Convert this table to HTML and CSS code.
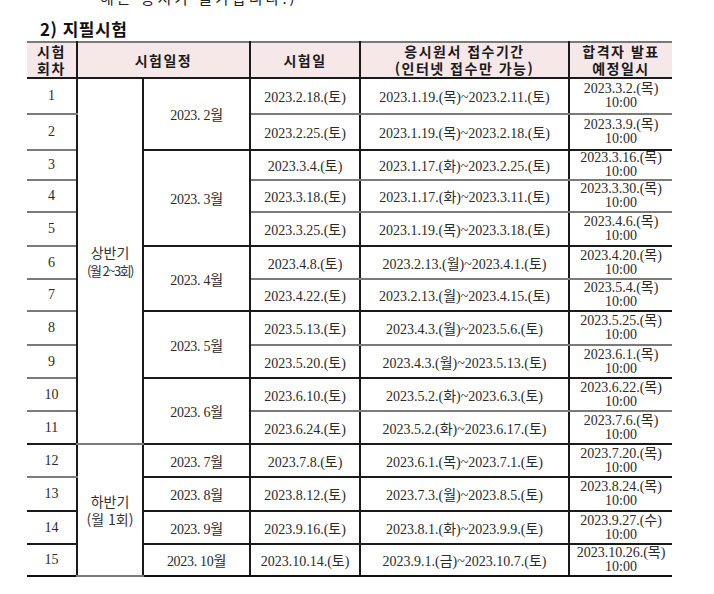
FILE: index.html
```html
<!DOCTYPE html>
<html lang="ko">
<head>
<meta charset="utf-8">
<link rel="stylesheet" href="styles.css">
</head>
<body>
<div class="page">
  <p class="cut">해는 응시가 불가합니다.)</p>
  <h2 class="title">2) 지필시험</h2>
  <table class="sched">
    <colgroup>
      <col class="c1"><col class="c2"><col class="c3"><col class="c4"><col class="c5"><col class="c6">
    </colgroup>
    <thead>
      <tr class="hd">
        <th>시험<br>회차</th>
        <th colspan="2">시험일정</th>
        <th>시험일</th>
        <th>응시원서 접수기간<br>(인터넷 접수만 가능)</th>
        <th>합격자 발표<br>예정일시</th>
      </tr>
    </thead>
    <tbody>
      <tr class="r36">
        <td class="no">1</td>
        <td class="half" rowspan="11">상반기<br><span class="sub">(월 2~3회)</span></td>
        <td class="mon grp" rowspan="2">2023. 2월</td>
        <td>2023.2.18.(토)</td>
        <td>2023.1.19.(목)~2023.2.11.(토)</td>
        <td class="ann">2023.3.2.(목)<br>10:00</td>
      </tr>
      <tr class="r36">
        <td class="no">2</td>
        <td class="grp">2023.2.25.(토)</td>
        <td class="grp">2023.1.19.(목)~2023.2.18.(토)</td>
        <td class="ann grp">2023.3.9.(목)<br>10:00</td>
      </tr>
      <tr class="r29">
        <td class="no">3</td>
        <td class="mon grp" rowspan="3">2023. 3월</td>
        <td>2023.3.4.(토)</td>
        <td>2023.1.17.(화)~2023.2.25.(토)</td>
        <td class="ann">2023.3.16.(목)<br>10:00</td>
      </tr>
      <tr class="r32">
        <td class="no">4</td>
        <td>2023.3.18.(토)</td>
        <td>2023.1.17.(화)~2023.3.11.(토)</td>
        <td class="ann">2023.3.30.(목)<br>10:00</td>
      </tr>
      <tr class="r34">
        <td class="no">5</td>
        <td class="grp">2023.3.25.(토)</td>
        <td class="grp">2023.1.19.(목)~2023.3.18.(토)</td>
        <td class="ann grp">2023.4.6.(목)<br>10:00</td>
      </tr>
      <tr class="r33">
        <td class="no">6</td>
        <td class="mon grp" rowspan="2">2023. 4월</td>
        <td>2023.4.8.(토)</td>
        <td>2023.2.13.(월)~2023.4.1.(토)</td>
        <td class="ann">2023.4.20.(목)<br>10:00</td>
      </tr>
      <tr class="r32">
        <td class="no">7</td>
        <td class="grp">2023.4.22.(토)</td>
        <td class="grp">2023.2.13.(월)~2023.4.15.(토)</td>
        <td class="ann grp">2023.5.4.(목)<br>10:00</td>
      </tr>
      <tr class="r34">
        <td class="no">8</td>
        <td class="mon grp" rowspan="2">2023. 5월</td>
        <td>2023.5.13.(토)</td>
        <td>2023.4.3.(월)~2023.5.6.(토)</td>
        <td class="ann">2023.5.25.(목)<br>10:00</td>
      </tr>
      <tr class="r33">
        <td class="no">9</td>
        <td class="grp">2023.5.20.(토)</td>
        <td class="grp">2023.4.3.(월)~2023.5.13.(토)</td>
        <td class="ann grp">2023.6.1.(목)<br>10:00</td>
      </tr>
      <tr class="r33">
        <td class="no">10</td>
        <td class="mon grp" rowspan="2">2023. 6월</td>
        <td>2023.6.10.(토)</td>
        <td>2023.5.2.(화)~2023.6.3.(토)</td>
        <td class="ann">2023.6.22.(목)<br>10:00</td>
      </tr>
      <tr class="r33">
        <td class="no grp">11</td>
        <td class="grp">2023.6.24.(토)</td>
        <td class="grp">2023.5.2.(화)~2023.6.17.(토)</td>
        <td class="ann grp">2023.7.6.(목)<br>10:00</td>
      </tr>
      <tr class="r33">
        <td class="no">12</td>
        <td class="half" rowspan="4">하반기<br><span class="sub2">(월 1회)</span></td>
        <td class="mon grp">2023. 7월</td>
        <td class="grp">2023.7.8.(토)</td>
        <td class="grp">2023.6.1.(목)~2023.7.1.(토)</td>
        <td class="ann grp">2023.7.20.(목)<br>10:00</td>
      </tr>
      <tr class="r34">
        <td class="no grp">13</td>
        <td class="mon grp">2023. 8월</td>
        <td class="grp">2023.8.12.(토)</td>
        <td class="grp">2023.7.3.(월)~2023.8.5.(토)</td>
        <td class="ann grp">2023.8.24.(목)<br>10:00</td>
      </tr>
      <tr class="r33">
        <td class="no grp">14</td>
        <td class="mon grp">2023. 9월</td>
        <td class="grp">2023.9.16.(토)</td>
        <td class="grp">2023.8.1.(화)~2023.9.9.(토)</td>
        <td class="ann grp">2023.9.27.(수)<br>10:00</td>
      </tr>
      <tr class="r32 last">
        <td class="no">15</td>
        <td class="mon">2023. 10월</td>
        <td>2023.10.14.(토)</td>
        <td>2023.9.1.(금)~2023.10.7.(토)</td>
        <td class="ann">2023.10.26.(목)<br>10:00</td>
      </tr>
    </tbody>
  </table>
</div>
</body>
</html>
```

FILE: styles.css
```css
html, body {
  margin: 0;
  padding: 0;
  background: #ffffff;
}

.page {
  width: 714px;
  height: 594px;
  overflow: hidden;
  padding-left: 27px;
  box-sizing: border-box;
}

.cut {
  margin: -11px 0 0 73px;
  font-family: "Noto Sans CJK KR", sans-serif;
  font-size: 15px;
  line-height: 17px;
  letter-spacing: 3px;
  color: #222;
  height: 17px;
  overflow: hidden;
  white-space: nowrap;
}

.title {
  margin: 13px 0 2px 13px;
  font-family: "Noto Sans CJK KR", sans-serif;
  font-weight: 700;
  font-size: 17px;
  line-height: 20px;
  letter-spacing: 0.5px;
  color: #111;
}

.sched {
  border-collapse: collapse;
  width: 645px;
  table-layout: fixed;
  font-family: "Liberation Serif", "Noto Sans CJK KR", serif;
  font-size: 14px;
  color: #2a2a2a;
  border-top: 2px solid #111;
  border-bottom: 2px solid #111;
}

.c1 { width: 50px; }
.c2 { width: 66px; }
.c3 { width: 107px; }
.c4 { width: 110px; }
.c5 { width: 209px; }
.c6 { width: 103px; }

.sched th,
.sched td {
  padding: 0;
  text-align: center;
  vertical-align: middle;
  border-left: 2px solid #1a1a1a;
  border-right: 2px solid #1a1a1a;
  border-top: 2px solid #7a7a7a;
  border-bottom: 2px solid #7a7a7a;
}

.sched th:first-child,
.sched td.no {
  border-left: none;
}

.sched th:last-child,
.sched td.ann {
  border-right: none;
}

.hd th {
  background: #f6e7e9;
  font-family: "Noto Sans CJK KR", sans-serif;
  font-weight: 700;
  font-size: 14px;
  line-height: 17px;
  letter-spacing: 1.5px;
  color: #1a1a1a;
  height: 34px;
  border-bottom: 2px solid #1a1a1a;
}

.r36 td { height: 34px; }
.r34 td { height: 32px; }
.r33 td { height: 31px; }
.r32 td { height: 30px; }
.r29 td { height: 27px; }

.sched td.grp {
  border-bottom-color: #1a1a1a;
}

.last td {
  border-bottom: 2px solid #111;
}

.ann {
  line-height: 14px;
}

.mon {
  letter-spacing: -0.3px;
}

.half {
  font-family: "Noto Sans CJK KR", sans-serif;
  font-size: 14px;
  line-height: 18px;
  color: #333;
}

.sub {
  font-size: 13px;
  letter-spacing: -1.5px;
}

.sub2 {
  font-size: 14px;
}
```
